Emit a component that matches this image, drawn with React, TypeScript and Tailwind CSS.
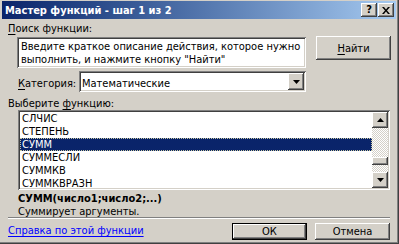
import React from 'react';

const raised =
  'shadow-[inset_-1px_-1px_#404040,inset_1px_1px_#ffffff,inset_-2px_-2px_#808080,inset_2px_2px_#d4d0c8]';
const sunken =
  'shadow-[inset_1px_1px_#808080,inset_-1px_-1px_#ffffff,inset_2px_2px_#404040,inset_-2px_-2px_#d4d0c8]';

const Arrow = ({ up }: { up?: boolean }) => (
  <svg width="7" height="4" viewBox="0 0 7 4">
    {up ? <polygon points="3.5,0 7,4 0,4" fill="#000" /> : <polygon points="0,0 7,0 3.5,4" fill="#000" />}
  </svg>
);

const functions = ['СЛЧИС', 'СТЕПЕНЬ', 'СУММ', 'СУММЕСЛИ', 'СУММКВ', 'СУММКВРАЗН'];

const App: React.FC = () => {
  const selected = 'СУММ';

  return (
    <div
      className={`w-[399px] h-[244px] bg-[#d4d0c8] text-[11px] leading-[13px] text-black font-['DejaVu_Sans_Condensed','Liberation_Sans',sans-serif] shadow-[inset_-1px_-1px_#404040,inset_-2px_-2px_#808080] pt-[1px] overflow-hidden`}
    >
      {/* title bar */}
      <div className="ml-[2px] mr-[3px] h-[18px] flex items-center bg-linear-to-r from-[#0a246a] to-[#a6caf0]">
        <span className="pl-[3px] flex-1 text-white font-bold text-[11px]">Мастер функций - шаг 1 из 2</span>
        <div className="flex gap-[1px] mr-[2px]">
          <button className={`w-[16px] h-[14px] bg-[#d4d0c8] ${raised} flex items-center justify-center text-[11px] font-bold leading-none pb-[1px]`}>
            ?
          </button>
          <button className={`w-[16px] h-[14px] bg-[#d4d0c8] ${raised} flex items-center justify-center`}>
            <svg width="8" height="7" viewBox="0 0 8 7">
              <path d="M0 0h2l2 2.5L6 0h2L5 3.5 8 7H6L4 4.5 2 7H0l3-3.5z" fill="#000" />
            </svg>
          </button>
        </div>
      </div>

      <div className="pl-[8px]">
        <div className="mt-[3px] h-[13px]">
          <span className="underline underline-offset-2">П</span>оиск функции:
        </div>

        {/* search row */}
        <div className="mt-[2px] flex items-start">
          <div className={`ml-[9px] w-[289px] h-[31px] bg-white ${sunken} pl-[4px] pt-[3px]`}>
            Введите краткое описание действия, которое нужно
            <br />
            выполнить, и нажмите кнопку "Найти"
          </div>
          <button className={`ml-[10px] w-[75px] h-[24px] -mt-[1px] bg-[#d4d0c8] ${raised} flex items-center justify-center`}>
            <span>
              <span className="underline underline-offset-2">Н</span>айти
            </span>
          </button>
        </div>

        {/* category row */}
        <div className="mt-[3px] flex items-start h-[21px]">
          <div className="ml-[10px] w-[61px] mt-[6px]">
            <span className="underline underline-offset-2">К</span>атегория:
          </div>
          <div className={`w-[227px] h-[21px] bg-white ${sunken} flex items-start p-[2px]`}>
            <span className="flex-1 pl-[1px] pt-[4px]">Математические</span>
            <div className={`w-[16px] h-[17px] bg-[#d4d0c8] ${raised} flex items-center justify-center`}>
              <Arrow />
            </div>
          </div>
        </div>

        <div className="mt-[5px] h-[13px]">
          Выберите <span className="underline underline-offset-2">ф</span>ункцию:
        </div>

        {/* function list */}
        <div className={`ml-[10px] w-[372px] h-[80px] bg-white ${sunken} p-[2px] flex`}>
          <div className="flex-1 flex flex-col overflow-hidden">
            {functions.map((f) => (
              <div
                key={f}
                className={`h-[13px] shrink-0 pl-[2px] ${
                  f === selected
                    ? 'bg-[#0a246a] text-white outline-1 outline-dotted outline-[#c8c8a0] -outline-offset-1'
                    : ''
                }`}
              >
                {f}
              </div>
            ))}
          </div>
          <div className="w-[16px] flex flex-col">
            <div className={`h-[16px] bg-[#d4d0c8] ${raised} flex items-center justify-center`}>
              <Arrow up />
            </div>
            <div className="flex-1 bg-[repeating-conic-gradient(#ffffff_0_25%,#d4d0c8_0_50%)] bg-[length:2px_2px] flex flex-col">
              <div className="h-[29px]" />
              <div className={`h-[8px] bg-[#d4d0c8] ${raised}`} />
            </div>
            <div className={`h-[16px] bg-[#d4d0c8] ${raised} flex items-center justify-center`}>
              <Arrow />
            </div>
          </div>
        </div>

        <div className="mt-[2px] pl-[10px] h-[13px] font-bold">СУММ(число1;число2;...)</div>
        <div className="pl-[10px] h-[12px]">Суммирует аргументы.</div>

        <div className="w-[382px] h-[2px] border-t border-t-[#808080] border-b border-b-white" />

        {/* bottom row */}
        <div className="mt-[4px] flex items-start">
          <a href="#" className="text-[#0000ff] underline underline-offset-2 w-[224px] pt-[1px]">
            Справка по этой функции
          </a>
          <button className="w-[75px] h-[17px] border border-black p-0 bg-[#d4d0c8]">
            <div className={`w-full h-full ${raised} flex items-center justify-center`}>ОК</div>
          </button>
          <button className={`ml-[8px] w-[75px] h-[17px] bg-[#d4d0c8] ${raised} flex items-center justify-center`}>
            Отмена
          </button>
        </div>
      </div>
    </div>
  );
};

export default App;
